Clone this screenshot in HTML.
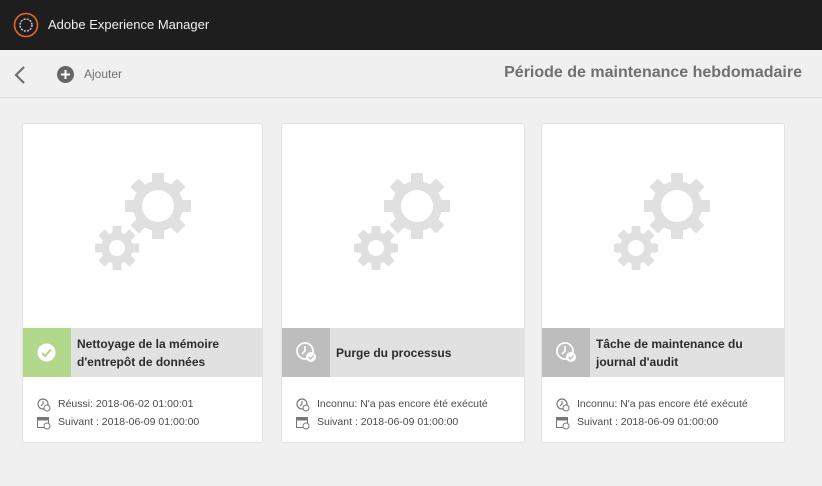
<!DOCTYPE html>
<html><head><meta charset="utf-8"><style>
*{margin:0;padding:0;box-sizing:border-box}
body{width:822px;height:486px;background:#f0f0f0;font-family:"Liberation Sans",sans-serif;overflow:hidden;position:relative}
.top{height:50px;background:#1e1e1e;color:#f0f0f0;position:relative}
.top .t{position:absolute;left:48px;top:17px;font-size:13px}
.bar2{height:48px;border-bottom:1px solid #dcdcdc;position:relative;color:#707070}
.card{position:absolute;top:123px;height:320px;background:#fff;border:1px solid #e2e2e2;border-radius:3px}
.st{position:absolute;left:0;right:0;top:204px;height:49px;background:#e1e1e1}
.sq{position:absolute;left:0;top:0;width:48px;height:49px}
.st .n{position:absolute;left:54px;top:0;height:49px;display:flex;align-items:center;font-size:12px;font-weight:bold;color:#2c2c2c;line-height:18px}
.info{position:absolute;left:14px;top:271px;font-size:10.5px;color:#4b4b4b;line-height:18px}
.info div{padding-left:21px;position:relative}
.info svg{position:absolute;left:0;top:3px}
.gear{position:absolute;left:48px;top:0}
</style></head><body>
<div class="top">
<svg style="position:absolute;left:13px;top:12px" width="26" height="26" viewBox="0 0 26 26"><circle cx="13" cy="13" r="11.5" fill="none" stroke="#e8672c" stroke-width="1.6"/><circle cx="13" cy="13" r="6" fill="none" stroke="#ddd" stroke-width="1.3" stroke-dasharray="2 1.2"/></svg>
<div class="t">Adobe Experience Manager</div></div>
<div class="bar2">
<svg style="position:absolute;left:13px;top:15px" width="14" height="20" viewBox="0 0 14 20"><path d="M11 2L3 10l8 8" fill="none" stroke="#6e6e6e" stroke-width="2.2"/></svg>
<svg style="position:absolute;left:57px;top:16px" width="17" height="17" viewBox="0 0 17 17"><circle cx="8.5" cy="8.5" r="8.5" fill="#666"/><path d="M8.5 4v9M4 8.5h9" stroke="#fff" stroke-width="2"/></svg>
<div style="position:absolute;left:84px;top:17px;font-size:12px">Ajouter</div>
<div style="position:absolute;right:20px;top:14px;font-size:16px;font-weight:bold;color:#707070">Période de maintenance hebdomadaire</div>
</div>

<svg width="0" height="0" style="position:absolute"><defs>
<g id="g"><g fill="#e0e0e0">
<g transform="translate(87,82)"><circle r="25"/><g id="tb"><rect x="-6" y="-33" width="12" height="11" rx="1.5"/></g>
<use href="#tb" transform="rotate(45)"/><use href="#tb" transform="rotate(90)"/><use href="#tb" transform="rotate(135)"/><use href="#tb" transform="rotate(180)"/><use href="#tb" transform="rotate(225)"/><use href="#tb" transform="rotate(270)"/><use href="#tb" transform="rotate(315)"/>
<circle r="16" fill="#fff"/></g>
<g transform="translate(46,124)"><circle r="16"/><g id="ts"><rect x="-4.5" y="-22" width="9" height="8" rx="1"/></g>
<use href="#ts" transform="rotate(45)"/><use href="#ts" transform="rotate(90)"/><use href="#ts" transform="rotate(135)"/><use href="#ts" transform="rotate(180)"/><use href="#ts" transform="rotate(225)"/><use href="#ts" transform="rotate(270)"/><use href="#ts" transform="rotate(315)"/>
<circle r="8" fill="#fff"/></g></g></g>
<g id="clk"><circle cx="6" cy="6" r="5" fill="none" stroke="#777" stroke-width="1.2"/><path d="M6 3v3l-2 2" fill="none" stroke="#777" stroke-width="1.1"/><circle cx="10" cy="10" r="3" fill="#fff" stroke="#777"/></g>
<g id="cal"><rect x="0.5" y="1.5" width="11" height="10" fill="none" stroke="#777"/><rect x="0.5" y="1.5" width="11" height="3" fill="#777"/><circle cx="10" cy="10" r="3" fill="#fff" stroke="#777"/></g>
<g id="wclk"><circle cx="10" cy="10" r="8" fill="none" stroke="#fff" stroke-width="1.8"/><path d="M10 5v5l-3 3" fill="none" stroke="#fff" stroke-width="1.6"/><circle cx="16" cy="16" r="5" fill="#fff"/><path d="M13.5 16l2 2 3-3.5" fill="none" stroke="#bdbdbd" stroke-width="1.3"/></g>
</defs></svg>

<div class="card" style="left:22px;width:241px">
<svg class="gear" width="130" height="160"><use href="#g"/></svg>
<div class="st"><div class="sq" style="background:#b2d88c"><svg style="position:absolute;left:14px;top:15px" width="19" height="19"><circle cx="9.5" cy="9.5" r="9" fill="#fff"/><path d="M5 10l3 3 6-6.5" fill="none" stroke="#b2d88c" stroke-width="2.2"/></svg></div>
<div class="n">Nettoyage de la mémoire<br>d'entrepôt de données</div></div>
<div class="info"><div><svg width="14" height="14"><use href="#clk"/></svg>Réussi: 2018-06-02 01:00:01</div><div><svg width="14" height="14"><use href="#cal"/></svg>Suivant : 2018-06-09 01:00:00</div></div>
</div>

<div class="card" style="left:281px;width:244px">
<svg class="gear" width="130" height="160"><use href="#g"/></svg>
<div class="st"><div class="sq" style="background:#bdbdbd"><svg style="position:absolute;left:13px;top:13px" width="24" height="24"><use href="#wclk"/></svg></div>
<div class="n">Purge du processus</div></div>
<div class="info"><div><svg width="14" height="14"><use href="#clk"/></svg>Inconnu: N'a pas encore été exécuté</div><div><svg width="14" height="14"><use href="#cal"/></svg>Suivant : 2018-06-09 01:00:00</div></div>
</div>

<div class="card" style="left:541px;width:244px">
<svg class="gear" width="130" height="160"><use href="#g"/></svg>
<div class="st"><div class="sq" style="background:#bdbdbd"><svg style="position:absolute;left:13px;top:13px" width="24" height="24"><use href="#wclk"/></svg></div>
<div class="n">Tâche de maintenance du<br>journal d'audit</div></div>
<div class="info"><div><svg width="14" height="14"><use href="#clk"/></svg>Inconnu: N'a pas encore été exécuté</div><div><svg width="14" height="14"><use href="#cal"/></svg>Suivant : 2018-06-09 01:00:00</div></div>
</div>
</body></html>
